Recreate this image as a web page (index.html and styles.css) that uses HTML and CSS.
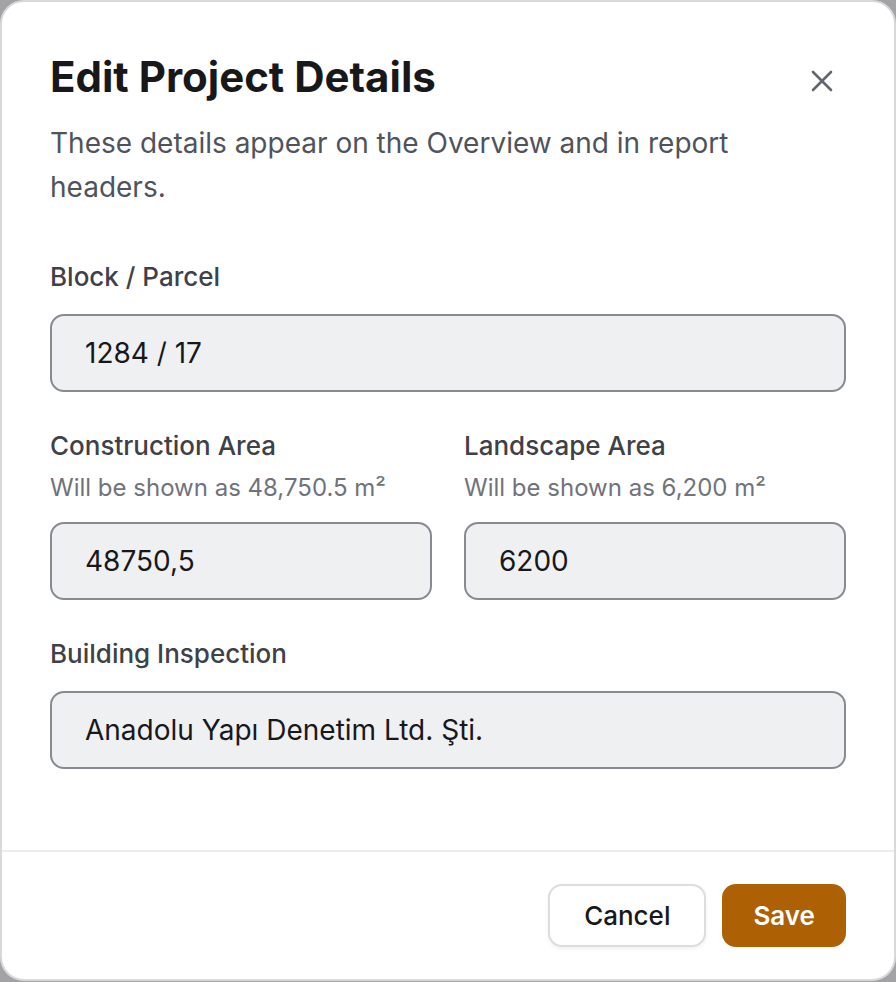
FILE: index.html
```html
<!DOCTYPE html>
<html lang="en">
<head>
  <meta charset="UTF-8">
  <meta name="viewport" content="width=device-width, initial-scale=1.0">
  <title>Edit Project Details</title>
  <link rel="stylesheet" href="styles.css">
</head>
<body>
  <div class="modal">
    <div class="modal-body">
      <div class="modal-header">
        <h1>Edit Project Details</h1>
        <button class="close-btn" aria-label="Close">
          <svg width="22" height="22" viewBox="0 0 22 22" fill="none">
            <path d="M2 2 L20 20 M20 2 L2 20" stroke="#62666e" stroke-width="2.6" stroke-linecap="round"/>
          </svg>
        </button>
      </div>
      <p class="description">These details appear on the Overview and in report headers.</p>

      <form class="form">
        <div class="field">
          <label for="parcel">Block / Parcel</label>
          <input type="text" id="parcel" value="1284 / 17">
        </div>

        <div class="field-row">
          <div class="field">
            <label for="construction">Construction Area</label>
            <small>Will be shown as 48,750.5 m²</small>
            <input type="text" id="construction" value="48750,5">
          </div>
          <div class="field">
            <label for="landscape">Landscape Area</label>
            <small>Will be shown as 6,200 m²</small>
            <input type="text" id="landscape" value="6200">
          </div>
        </div>

        <div class="field">
          <label for="inspection">Building Inspection</label>
          <input type="text" id="inspection" value="Anadolu Yapı Denetim Ltd. Şti.">
        </div>
      </form>
    </div>

    <div class="modal-footer">
      <button class="btn btn-cancel">Cancel</button>
      <button class="btn btn-save">Save</button>
    </div>
  </div>
</body>
</html>
```

FILE: styles.css
```css
* {
  box-sizing: border-box;
}

body {
  margin: 0;
  background: #a3a3a6;
  font-family: 'Inter', 'Noto Sans', sans-serif;
  color: #18181b;
}

.modal {
  width: 896px;
  background: #fff;
  border: 2px solid #d9d9dd;
  border-radius: 24px;
  overflow: hidden;
}

.modal-body {
  padding: 49px 48px 81px;
}

.modal-header {
  display: flex;
  justify-content: space-between;
  align-items: flex-start;
}

.modal-header h1 {
  margin: 0;
  font-size: 42px;
  line-height: 52px;
  font-weight: 700;
  color: #18181b;
}

.close-btn {
  width: 44px;
  height: 44px;
  margin-top: 8px;
  margin-right: 2px;
  border: none;
  background: transparent;
  display: flex;
  align-items: center;
  justify-content: center;
  cursor: pointer;
  padding: 0;
}

.description {
  margin: 18px 0 0;
  font-size: 28px;
  line-height: 44px;
  color: #50535b;
  max-width: 720px;
}

.form {
  margin-top: 52px;
  display: flex;
  flex-direction: column;
  gap: 38px;
}

.field {
  display: flex;
  flex-direction: column;
  min-width: 0;
}

.field-row {
  display: grid;
  grid-template-columns: minmax(0, 1fr) minmax(0, 1fr);
  gap: 32px;
}

.field label {
  font-size: 26px;
  line-height: 32px;
  font-weight: 500;
  color: #3f4148;
}

.field small {
  margin-top: 11px;
  font-size: 24px;
  line-height: 30px;
  color: #70737b;
}

.field input {
  margin-top: 21px;
  width: 100%;
  min-width: 0;
  height: 78px;
  padding: 0 33px;
  border: 2px solid #878a91;
  border-radius: 14px;
  background: #eff0f2;
  font-family: 'Inter', 'Noto Sans', sans-serif;
  font-size: 28px;
  color: #18181b;
  outline: none;
}

.field small + input {
  margin-top: 19px;
}

.modal-footer {
  border-top: 2px solid #ededf0;
  padding: 32px 48px 32px;
  display: flex;
  justify-content: flex-end;
  gap: 16px;
}

.btn {
  height: 63px;
  border-radius: 14px;
  font-family: 'Inter', 'Noto Sans', sans-serif;
  font-size: 26px;
  cursor: pointer;
}

.btn-cancel {
  padding: 0 34px;
  background: #fff;
  border: 2px solid #dcdce1;
  box-shadow: 0 2px 4px rgba(0, 0, 0, 0.06);
  color: #18181b;
  font-weight: 500;
}

.btn-save {
  padding: 0 31px;
  background: #ad6004;
  border: none;
  color: #fff;
  font-weight: 600;
}
```
